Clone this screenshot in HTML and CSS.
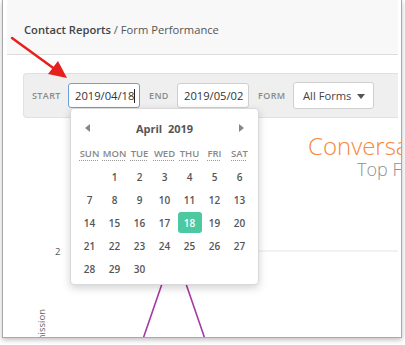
FILE: index.html
```html
<!DOCTYPE html>
<html lang="en">
<head>
    <meta charset="UTF-8">
    <meta name="viewport" content="width=device-width, initial-scale=1.0">
    <title>Form Performance</title>
    <link rel="stylesheet" href="styles.css">
</head>
<body>
    <div class="window">
        <div class="header">
            <strong>Contact Reports</strong> / Form Performance
        </div>

        <div class="content">
            <div class="toolbar">
                <span class="label label-start">START</span>
                <div class="field focused">2019/04/18<span class="caret"></span></div>
                <span class="label label-end">END</span>
                <div class="field">2019/05/02</div>
                <span class="label label-form">FORM</span>
                <div class="select">All Forms <span class="select-arrow"></span></div>
            </div>

            <div class="chart">
                <div class="chart-title">Conversations</div>
                <div class="chart-subtitle">Top Forms</div>
                <svg class="chart-plot" width="391" height="160" viewBox="0 0 391 160">
                    <line x1="63" y1="70" x2="391" y2="70" stroke="#eeeeee" stroke-width="1.5"/>
                    <text x="48" y="74" class="axis-label">2</text>
                    <polyline points="136,158 167,68 198,158" fill="none" stroke="#a43aa5" stroke-width="1.6"/>
                    <text class="axis-title" transform="translate(38,128) rotate(-90)" text-anchor="end">Submission</text>
                </svg>
            </div>
        </div>

        <!-- datepicker abierto sobre el grafico -->
        <div class="datepicker">
            <div class="dp-nav">
                <span class="dp-prev"></span>
                <span class="dp-title">April&nbsp; 2019</span>
                <span class="dp-next"></span>
            </div>
            <div class="dp-grid">
                <span class="dp-dow"><abbr>SUN</abbr></span>
                <span class="dp-dow"><abbr>MON</abbr></span>
                <span class="dp-dow"><abbr>TUE</abbr></span>
                <span class="dp-dow"><abbr>WED</abbr></span>
                <span class="dp-dow"><abbr>THU</abbr></span>
                <span class="dp-dow"><abbr>FRI</abbr></span>
                <span class="dp-dow"><abbr>SAT</abbr></span>

                <span></span><span>1</span><span>2</span><span>3</span><span>4</span><span>5</span><span>6</span>
                <span>7</span><span>8</span><span>9</span><span>10</span><span>11</span><span>12</span><span>13</span>
                <span>14</span><span>15</span><span>16</span><span>17</span><span class="selected">18</span><span>19</span><span>20</span>
                <span>21</span><span>22</span><span>23</span><span>24</span><span>25</span><span>26</span><span>27</span>
                <span>28</span><span>29</span><span>30</span><span></span><span></span><span></span><span></span>
            </div>
        </div>
    </div>

    <!-- flecha de anotacion -->
    <svg class="annotation" width="80" height="90" viewBox="0 0 80 90">
        <line x1="12" y1="38" x2="56" y2="70" stroke="#e6201c" stroke-width="2.5" stroke-linecap="round"/>
        <polygon points="67,78 48,74 58,61" fill="#e6201c"/>
    </svg>
</body>
</html>
```

FILE: styles.css
```css
* { margin: 0; padding: 0; box-sizing: border-box; }
body {
    font-family: 'Open Sans', 'Liberation Sans', sans-serif;
    background: #fff;
    color: #555;
    width: 405px;
    height: 345px;
    overflow: hidden;
    position: relative;
}
.window {
    position: relative;
    margin-left: 2px;
    width: 400px;
    height: 338px;
    border: 1px solid #a9a9a9;
    border-top: none;
    padding: 0 3px 0 4px;
    background: #fff;
    overflow: hidden;
    box-shadow: 0 2px 5px rgba(0,0,0,0.25);
}
.header {
    height: 55px;
    background: #f8f8f8;
    border-bottom: 1px solid #dcdcdc;
    padding: 22px 0 0 17px;
    font-size: 11.2px;
    color: #555;
}
.header strong {
    font-weight: 600;
    color: #444;
}
.content {
    padding: 18px 0 0 16px;
}
.toolbar {
    height: 45px;
    display: flex;
    align-items: center;
    background: #efefef;
    border: 1px solid #e1e1e1;
    border-right: none;
    border-radius: 4px 0 0 4px;
    padding-left: 8px;
}
.label {
    font-size: 9px;
    font-weight: 600;
    color: #8a8a8a;
    letter-spacing: 0.4px;
}
.label-start { width: 36px; }
.label-end { width: 28px; }
.label-form { width: 35px; }
.field {
    width: 72px;
    height: 25px;
    line-height: 23px;
    background: #fff;
    border: 1px solid #cfcfcf;
    border-radius: 3px;
    font-size: 11.2px;
    color: #333;
    padding-left: 6px;
    margin-right: 9px;
}
.field.focused { border-color: #6c9fd6; }
.caret {
    display: inline-block;
    width: 1px;
    height: 14px;
    background: #222;
    vertical-align: -3px;
}
.select {
    width: 81px;
    height: 27px;
    line-height: 25px;
    background: #fff;
    border: 1px solid #cfcfcf;
    border-radius: 3px;
    font-size: 11.2px;
    color: #444;
    padding-left: 9px;
    position: relative;
}
.select-arrow {
    position: absolute;
    right: 8px;
    top: 11px;
    border-left: 4px solid transparent;
    border-right: 4px solid transparent;
    border-top: 5px solid #555;
}
.chart {
    margin-left: -16px;
}
.chart-title {
    margin: 13px 0 0 301px;
    font-size: 24px;
    font-weight: 300;
    color: #f5883a;
    white-space: nowrap;
    line-height: 30px;
}
.chart-subtitle {
    margin: -4px 0 0 350px;
    font-size: 18px;
    font-weight: 300;
    color: #8f8f8f;
    white-space: nowrap;
    line-height: 24px;
}
.chart-plot { display: block; }
.axis-label { font-size: 9.5px; fill: #555; }
.axis-title { font-size: 9.5px; fill: #666; }
.datepicker {
    position: absolute;
    left: 67px;
    top: 108px;
    width: 189px;
    height: 177px;
    background: #fff;
    border: 1px solid #d9d9d9;
    border-radius: 4px;
    box-shadow: 0 3px 8px rgba(0,0,0,0.18);
    padding: 8px 6px 0 6px;
}
.dp-nav {
    height: 22px;
    display: flex;
    align-items: center;
    justify-content: space-between;
    padding: 0 8px 0 8px;
}
.dp-title {
    font-size: 11px;
    font-weight: 700;
    color: #555;
}
.dp-prev, .dp-next {
    width: 0;
    height: 0;
    border-top: 4px solid transparent;
    border-bottom: 4px solid transparent;
}
.dp-prev { border-right: 5px solid #888; }
.dp-next { border-left: 5px solid #888; }
.dp-grid {
    margin-top: 3px;
    display: grid;
    grid-template-columns: repeat(7, 25px);
    grid-auto-rows: 23px;
    align-items: center;
    justify-items: center;
    font-size: 10px;
    font-weight: 600;
    color: #555;
}
.dp-grid span {
    display: flex;
    align-items: center;
    justify-content: center;
    height: 21px;
    width: 24px;
}
.dp-dow {
    font-size: 9.5px;
    font-weight: 600;
    color: #888;
}
.dp-dow abbr {
    text-decoration: underline dotted #999;
    text-underline-offset: 3px;
}
.dp-grid .selected {
    background: #4cc9a0;
    color: #fff;
    border-radius: 3px;
}
.annotation {
    position: absolute;
    left: 0;
    top: 0;
}
```
